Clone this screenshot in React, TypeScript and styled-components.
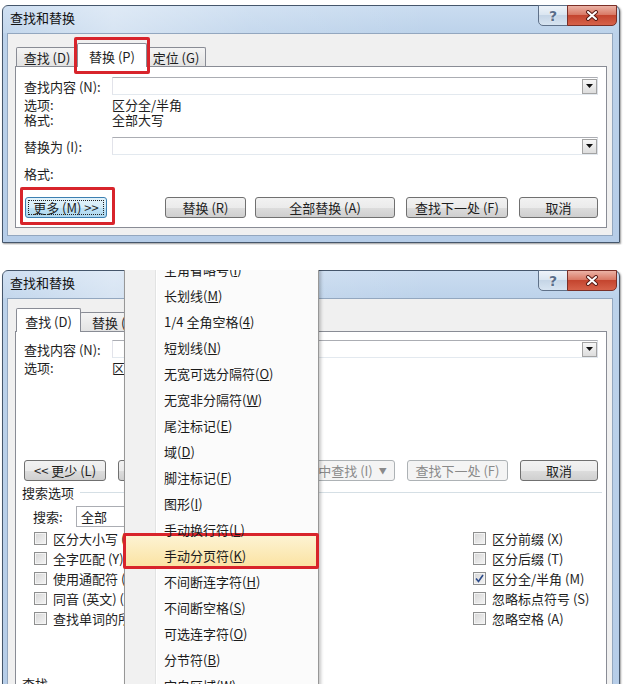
import React from 'react';
import styled, { createGlobalStyle, css } from 'styled-components';

const GlobalStyle = createGlobalStyle`
  * { box-sizing: border-box; }
  html, body {
    margin: 0;
    padding: 0;
    background: #fff;
  }
  body {
    width: 628px;
    height: 684px;
    overflow: hidden;
    font-family: "Noto Sans CJK SC", "Liberation Sans", sans-serif;
    font-size: 13px;
    color: #1e1e1e;
  }
`;

const Page = styled.div`
  display: flex;
  flex-direction: column;
  width: 628px;
  height: 684px;
  overflow: hidden;
`;

// one cropped screenshot of the dialog
const Shot = styled.div<{ $gap: number; $h: number }>`
  position: relative;
  flex: none;
  margin-top: ${p => p.$gap}px;
  height: ${p => p.$h}px;
  overflow: hidden;
`;

const Window = styled.div`
  margin-left: 2px;
  width: 618px;
  display: flex;
  flex-direction: column;
  border: 1px solid #45566b;
  border-radius: 6px 6px 0 0;
  background: linear-gradient(180deg, #cadcf0 0px, #bcd2ea 28px, #b6cde8 100%);
  box-shadow: 1px 1px 2px rgba(0, 0, 0, 0.4);
  padding: 0 6px 6px 4px;
`;

const TitleBar = styled.div`
  display: flex;
  height: 27px;
  margin: 0 -4px 0 -4px;
  padding-left: 7px;
  background: linear-gradient(90deg, rgba(255,255,255,0.1) 0, rgba(255,255,255,0.4) 18%, rgba(255,255,255,0.15) 40%, rgba(255,255,255,0) 70%);
`;

const Title = styled.div`
  line-height: 24px;
  font-size: 13px;
  color: #111;
`;

const Captions = styled.div`
  display: flex;
  margin-left: auto;
  margin-top: -1px;
`;

const CaptionBtn = styled.div<{ $kind: 'help' | 'close' }>`
  display: flex;
  align-items: center;
  justify-content: center;
  height: 21px;
  ${p => p.$kind === 'help'
    ? css`
        width: 30px;
        border: 1px solid #5f7189;
        border-radius: 0 0 0 5px;
        background: linear-gradient(180deg, #eef3f9 0%, #dbe6f1 45%, #c5d5e6 50%, #d7e4f1 100%);
        color: #5a6e8a;
        font-weight: bold;
        font-size: 14px;
        font-family: "DejaVu Sans", sans-serif;
        text-shadow: 0 0 2px #fff;
      `
    : css`
        width: 50px;
        margin-left: -1px;
        border: 1px solid #7a2f27;
        border-radius: 0 0 5px 0;
        background: linear-gradient(180deg, #ebb2a5 0%, #d97a66 45%, #c4452f 50%, #d6624a 100%);
      `}
`;

const Client = styled.div`
  display: flex;
  flex-direction: column;
  border: 1px solid #93a7bf;
  background: #f0f0f0;
  padding: 9px 5px 7px 7px;
`;

const TabStrip = styled.div`
  display: flex;
  align-items: flex-end;
  height: 23px;
  padding-left: 1px;
`;

const Tab = styled.div<{ $w: number; $active?: boolean; $first?: boolean }>`
  position: relative;
  display: flex;
  align-items: center;
  justify-content: center;
  width: ${p => p.$w}px;
  height: ${p => (p.$active ? 24 : 19)}px;
  margin-left: ${p => (p.$first ? 0 : -1)}px;
  margin-bottom: ${p => (p.$active ? -1 : 0)}px;
  padding-top: 1px;
  border: 1px solid #898c95;
  border-bottom: none;
  border-radius: 2px 2px 0 0;
  background: ${p => (p.$active ? '#fff' : 'linear-gradient(180deg, #f4f4f4, #e3e3e3)')};
  z-index: ${p => (p.$active ? 2 : 1)};
  font-size: 13px;
`;

const Panel = styled.div`
  display: flex;
  flex-direction: column;
  border: 1px solid #898c95;
  background: #fff;
  padding: 0 8px 9px 8px;
`;

const FieldRow = styled.div<{ $mt: number }>`
  display: flex;
  align-items: center;
  height: 18px;
  margin-top: ${p => p.$mt}px;
`;

const Label = styled.div<{ $w?: number }>`
  flex: none;
  width: ${p => p.$w ?? 88}px;
  white-space: nowrap;
`;

const TextBox = styled.div`
  flex: 1;
  display: flex;
  align-items: center;
  justify-content: flex-end;
  height: 18px;
  border: 1px solid;
  border-color: #abadb3 #dbdfe6 #e3e9ef #e2e3ea;
  background: #fff;
`;

const DropBtn = styled.div`
  display: flex;
  align-items: center;
  justify-content: center;
  width: 15px;
  height: 15px;
  border: 1px solid #a3a3a3;
  background: linear-gradient(180deg, #f7f7f7, #dddddd);
`;

const InfoLine = styled.div<{ $mt?: number }>`
  display: flex;
  height: 15px;
  line-height: 15px;
  margin-top: ${p => p.$mt ?? 0}px;
  white-space: nowrap;
`;

const ButtonRow = styled.div<{ $mt: number }>`
  display: flex;
  height: 21px;
  margin-top: ${p => p.$mt}px;
`;

const Button = styled.div<{ $w: number; $ml: number; $state?: 'default' | 'disabled' }>`
  position: relative;
  flex: none;
  display: flex;
  align-items: center;
  justify-content: center;
  width: ${p => p.$w}px;
  height: 21px;
  margin-left: ${p => p.$ml}px;
  border: 1px solid #707070;
  border-radius: 3px;
  background: linear-gradient(180deg, #f2f2f2 0%, #ebebeb 50%, #dddddd 50%, #cfcfcf 100%);
  white-space: nowrap;
  font-size: 13px;
  ${p => p.$state === 'default' && css`
    border-color: #3c7fb1;
    background: linear-gradient(180deg, #e3f3fb 0%, #d4ecf8 50%, #bfe2f5 50%, #aed8ef 100%);
    outline: 1px dotted #222;
    outline-offset: -4px;
  `}
  ${p => p.$state === 'disabled' && css`
    border-color: #adb2b5;
    background: #f4f4f4;
    color: #8a8a8a;
  `}
`;

const Caret = styled.span`
  font-size: 8px;
  margin-left: 6px;
`;

const RedFrame = styled.div<{ $t: number; $r: number; $b: number; $l: number; $fill?: string }>`
  position: absolute;
  top: ${p => p.$t}px;
  right: ${p => p.$r}px;
  bottom: ${p => p.$b}px;
  left: ${p => p.$l}px;
  border: 3px solid #d8242b;
  border-radius: 2px;
  background: ${p => p.$fill ?? 'transparent'};
  z-index: 3;
  pointer-events: none;
`;

const SectionHeader = styled.div`
  display: flex;
  align-items: center;
  height: 16px;
  margin: 3px -4px 0 -2px;
  white-space: nowrap;
`;

const Rule = styled.div`
  flex: 1;
  height: 1px;
  margin-left: 6px;
  background: #d5dfe5;
`;

const SearchRow = styled.div`
  display: flex;
  align-items: center;
  height: 21px;
  margin-top: 6px;
  padding-left: 9px;
`;

const Select = styled.div`
  width: 160px;
  height: 21px;
  line-height: 19px;
  padding-left: 4px;
  border: 1px solid #abadb3;
  background: #fff;
`;

const CheckGrid = styled.div`
  display: grid;
  grid-template-columns: 439px 1fr;
  grid-auto-rows: 20px;
  margin-top: 1px;
  padding-left: 10px;
`;

const CheckItem = styled.div`
  display: flex;
  align-items: center;
  gap: 6px;
  white-space: nowrap;
`;

const CheckBox = styled.div`
  display: flex;
  align-items: center;
  justify-content: center;
  width: 13px;
  height: 13px;
  border: 1px solid #8e8f8f;
  background: linear-gradient(135deg, #d6d6d6 0%, #f4f4f4 100%);
  box-shadow: inset 0 0 0 1px #f4f4f4;
`;

const BottomLabel = styled.div`
  margin: 48px 0 0 -2px;
  height: 16px;
  line-height: 16px;
`;

const Menu = styled.div`
  position: absolute;
  left: 124px;
  top: -14px;
  width: 195px;
  border: 1px solid #979797;
  background: linear-gradient(90deg, #f1f1f1 0 30px, #e2e3e3 30px 31px, #ffffff 31px 32px, #fbfbfb 32px);
  box-shadow: 2px 2px 3px rgba(0, 0, 0, 0.22);
  z-index: 10;
`;

const MenuItem = styled.div<{ $hot?: boolean }>`
  position: relative;
  height: 26px;
  line-height: 26px;
  padding-left: 39px;
  font-size: 13px;
  color: #1b1b1b;
  white-space: nowrap;
  background: ${p => (p.$hot ? 'linear-gradient(180deg, #fdf3d3, #fbe3a3)' : 'transparent')};
`;

const ItemText = styled.span`
  position: relative;
  z-index: 4;
`;

const Tri = () => (
  <svg width="7" height="4" viewBox="0 0 7 4">
    <path d="M0 0 H7 L3.5 4 Z" fill="#111" />
  </svg>
);

const CloseGlyph = () => (
  <svg width="14" height="11" viewBox="0 0 14 11">
    <path d="M3 2 L11 9 M11 2 L3 9" stroke="#5a1d16" strokeWidth="4" strokeLinecap="round" />
    <path d="M3 2 L11 9 M11 2 L3 9" stroke="#fff" strokeWidth="2" strokeLinecap="round" />
  </svg>
);

const CheckMark = () => (
  <svg width="9" height="9" viewBox="0 0 9 9">
    <path d="M1 4.5 L3.5 7.5 L8 1" stroke="#2b4a8a" strokeWidth="1.6" fill="none" />
  </svg>
);

const TitleRow = () => (
  <TitleBar>
    <Title>查找和替换</Title>
    <Captions>
      <CaptionBtn $kind="help">?</CaptionBtn>
      <CaptionBtn $kind="close"><CloseGlyph /></CaptionBtn>
    </Captions>
  </TitleBar>
);

const menuItems: { text: string; key: string; hot?: boolean }[] = [
  { text: '全角省略号', key: 'I' },
  { text: '长划线', key: 'M' },
  { text: '1/4 全角空格', key: '4' },
  { text: '短划线', key: 'N' },
  { text: '无宽可选分隔符', key: 'O' },
  { text: '无宽非分隔符', key: 'W' },
  { text: '尾注标记', key: 'E' },
  { text: '域', key: 'D' },
  { text: '脚注标记', key: 'F' },
  { text: '图形', key: 'I' },
  { text: '手动换行符', key: 'L' },
  { text: '手动分页符', key: 'K', hot: true },
  { text: '不间断连字符', key: 'H' },
  { text: '不间断空格', key: 'S' },
  { text: '可选连字符', key: 'O' },
  { text: '分节符', key: 'B' },
  { text: '空白区域', key: 'W' },
];

const leftChecks = ['区分大小写 (H)', '全字匹配 (Y)', '使用通配符 (U)', '同音 (英文) (K)', '查找单词的所有形式 (英文) (W)'];
const rightChecks = [
  { text: '区分前缀 (X)' },
  { text: '区分后缀 (T)' },
  { text: '区分全/半角 (M)', checked: true },
  { text: '忽略标点符号 (S)' },
  { text: '忽略空格 (A)' },
];

const ReplaceDialog = () => (
  <Window>
    <TitleRow />
    <Client>
      <TabStrip>
        <Tab $w={62} $first>查找 (D)</Tab>
        <Tab $w={70} $active>
          替换 (P)
          <RedFrame $t={-7} $r={-4} $b={-7} $l={-4} />
        </Tab>
        <Tab $w={60}>定位 (G)</Tab>
      </TabStrip>
      <Panel>
        <FieldRow $mt={10}>
          <Label>查找内容 (N):</Label>
          <TextBox><DropBtn><Tri /></DropBtn></TextBox>
        </FieldRow>
        <InfoLine $mt={2}><Label>选项:</Label>区分全/半角</InfoLine>
        <InfoLine><Label>格式:</Label>全部大写</InfoLine>
        <FieldRow $mt={10}>
          <Label>替换为 (I):</Label>
          <TextBox><DropBtn><Tri /></DropBtn></TextBox>
        </FieldRow>
        <InfoLine $mt={11}><Label>格式:</Label></InfoLine>
        <ButtonRow $mt={16}>
          <Button $w={82} $ml={1} $state="default">
            更多 (M) &gt;&gt;
            <RedFrame $t={-11} $r={-9} $b={-8} $l={-6} />
          </Button>
          <Button $w={81} $ml={58}>替换 (R)</Button>
          <Button $w={140} $ml={9}>全部替换 (A)</Button>
          <Button $w={102} $ml={11}>查找下一处 (F)</Button>
          <Button $w={79} $ml={11}>取消</Button>
        </ButtonRow>
      </Panel>
    </Client>
  </Window>
);

const FindDialog = () => (
  <Window>
    <TitleRow />
    <Client>
      <TabStrip>
        <Tab $w={65} $active $first>查找 (D)</Tab>
        <Tab $w={70}>替换 (P)</Tab>
        <Tab $w={60}>定位 (G)</Tab>
      </TabStrip>
      <Panel>
        <FieldRow $mt={8}>
          <Label>查找内容 (N):</Label>
          <TextBox><DropBtn><Tri /></DropBtn></TextBox>
        </FieldRow>
        <InfoLine $mt={2}><Label>选项:</Label>区分全/半角</InfoLine>
        <ButtonRow $mt={85}>
          <Button $w={82} $ml={0}>&lt;&lt; 更少 (L)</Button>
          <Button $w={130} $ml={12}>阅读突出显示 (R)<Caret>▼</Caret></Button>
          <Button $w={137} $ml={10} $state="disabled">在以下项中查找 (I)<Caret>▼</Caret></Button>
          <Button $w={101} $ml={12} $state="disabled">查找下一处 (F)</Button>
          <Button $w={78} $ml={12}>取消</Button>
        </ButtonRow>
        <SectionHeader>搜索选项<Rule /></SectionHeader>
        <SearchRow>
          <Label $w={43}>搜索:</Label>
          <Select>全部</Select>
        </SearchRow>
        <CheckGrid>
          {leftChecks.map((l, i) => (
            <React.Fragment key={l}>
              <CheckItem><CheckBox />{l}</CheckItem>
              <CheckItem>
                <CheckBox>{rightChecks[i].checked && <CheckMark />}</CheckBox>
                {rightChecks[i].text}
              </CheckItem>
            </React.Fragment>
          ))}
        </CheckGrid>
        <BottomLabel>查找</BottomLabel>
      </Panel>
    </Client>
  </Window>
);

export default function App() {
  return (
    <Page>
      <GlobalStyle />
      <Shot $gap={5} $h={240}>
        <ReplaceDialog />
      </Shot>
      <Shot $gap={25} $h={414}>
        <FindDialog />
        <Menu>
          {menuItems.map((m, i) => (
            <MenuItem key={i} $hot={m.hot}>
              {m.hot && <RedFrame $t={-10} $r={-1} $b={0} $l={-2} $fill="linear-gradient(180deg, #fdf3d3, #fbe3a3)" />}
              <ItemText>{m.text}(<u>{m.key}</u>)</ItemText>
            </MenuItem>
          ))}
        </Menu>
      </Shot>
    </Page>
  );
}
